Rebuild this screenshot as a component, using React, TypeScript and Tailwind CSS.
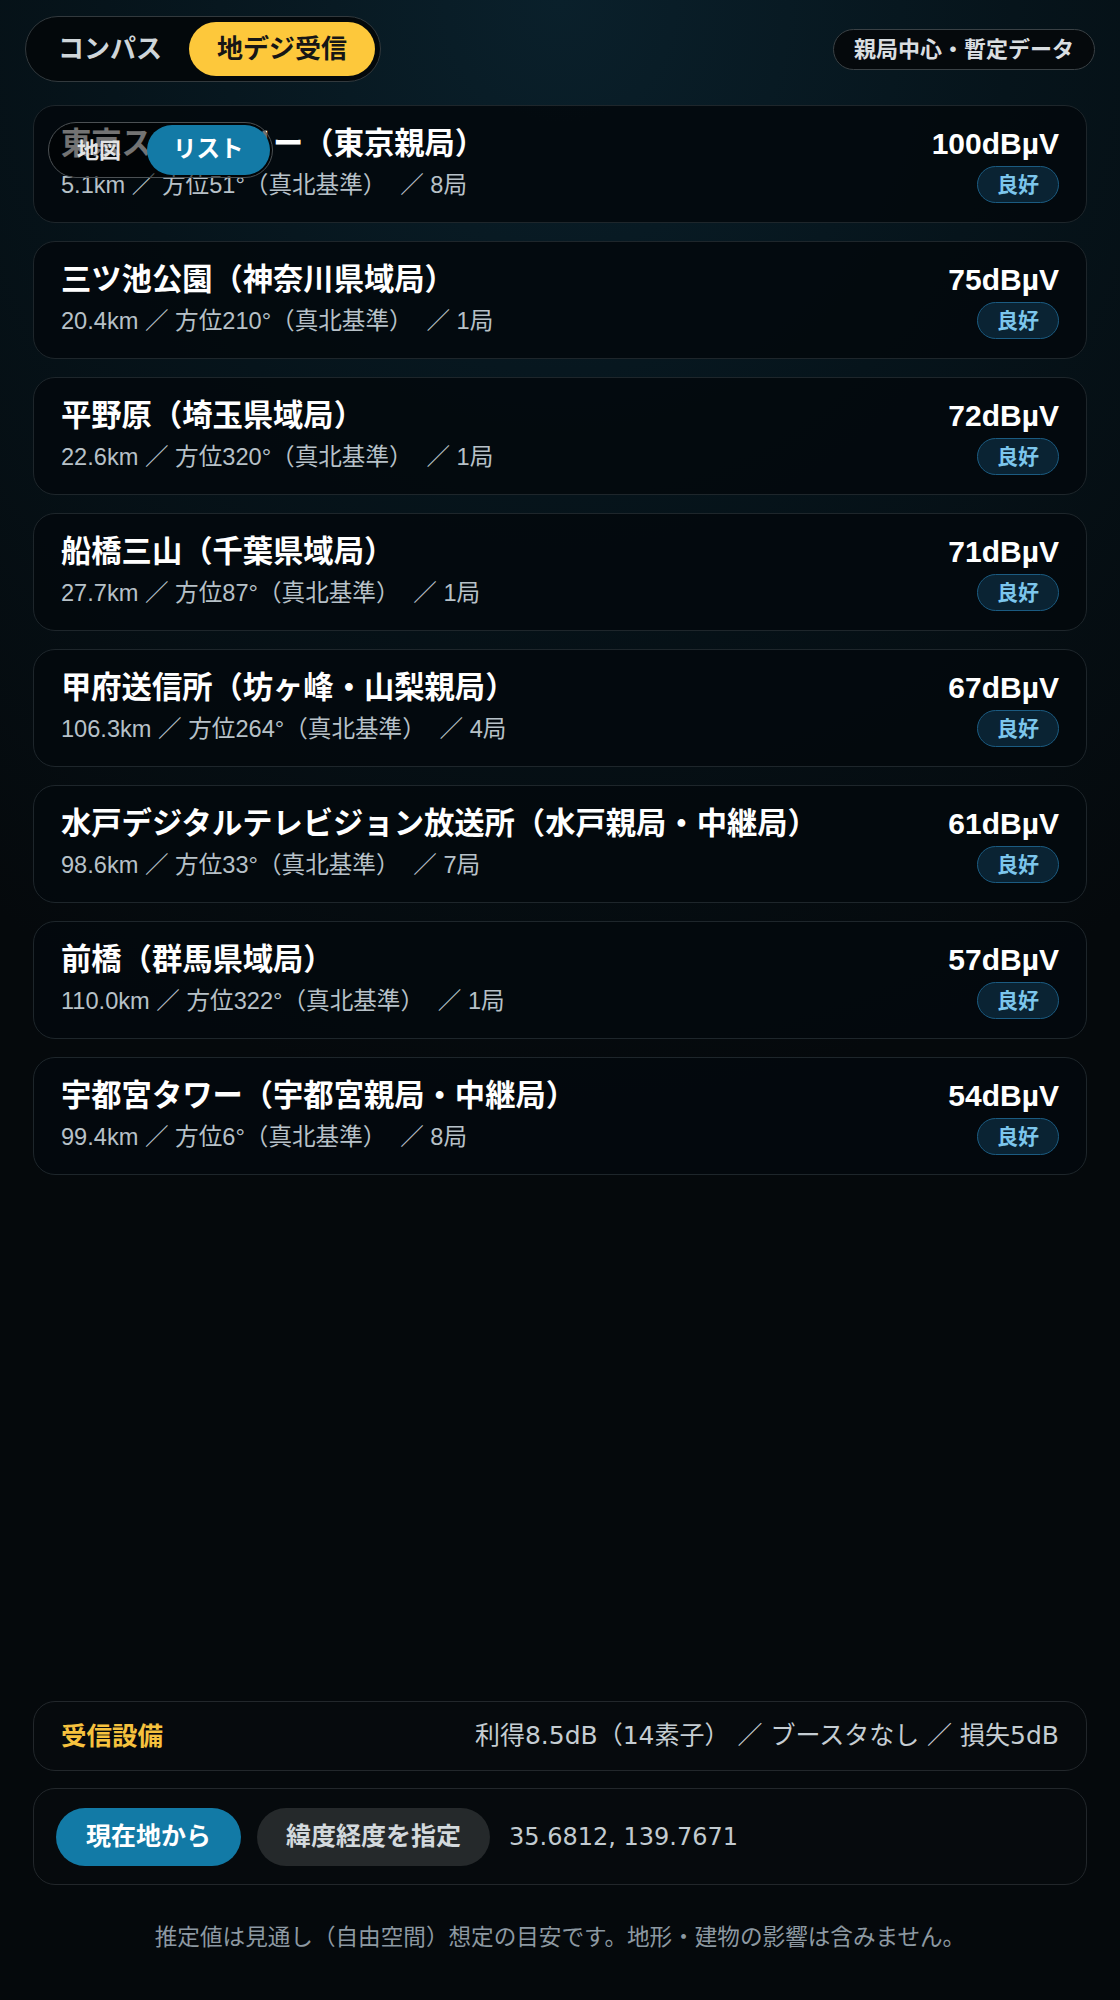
const stations = [
  { name: "東京スカイツリー（東京親局）", km: "5.1", deg: 51, count: 8, db: 100 },
  { name: "三ツ池公園（神奈川県域局）", km: "20.4", deg: 210, count: 1, db: 75 },
  { name: "平野原（埼玉県域局）", km: "22.6", deg: 320, count: 1, db: 72 },
  { name: "船橋三山（千葉県域局）", km: "27.7", deg: 87, count: 1, db: 71 },
  { name: "甲府送信所（坊ヶ峰・山梨親局）", km: "106.3", deg: 264, count: 4, db: 67 },
  { name: "水戸デジタルテレビジョン放送所（水戸親局・中継局）", km: "98.6", deg: 33, count: 7, db: 61 },
  { name: "前橋（群馬県域局）", km: "110.0", deg: 322, count: 1, db: 57 },
  { name: "宇都宮タワー（宇都宮親局・中継局）", km: "99.4", deg: 6, count: 8, db: 54 },
];

const StationCard = ({ s }) => {
  return (
    <div className="flex justify-between items-start h-[118px] px-[27px] pt-[20px] rounded-[22px] border border-[#1e262b] bg-[#03090d]/90">
      <div className="min-w-0">
        <div className="text-[30.3px] leading-[36px] font-bold text-white whitespace-nowrap">{s.name}</div>
        <div className="mt-[7px] text-[23.6px] leading-[32px] text-[#b7c1c8] whitespace-nowrap">
          {s.km}km ／ 方位{s.deg}°（真北基準）　<span className="pl-[2px]">／ {s.count}局</span>
        </div>
      </div>
      <div className="flex flex-col items-end shrink-0">
        <div className="text-[30px] leading-[36px] font-bold text-white">{s.db}dBµV</div>
        <div className="mt-[4px] h-[37px] px-[19px] flex items-center rounded-full border-[1.5px] border-[#1b5b81] bg-[#0a2333] text-[21px] font-bold text-[#7cc6ec]">
          良好
        </div>
      </div>
    </div>
  );
};

export default function App() {
  return (
    <div className="min-h-screen flex flex-col font-['Liberation_Sans','Noto_Sans_CJK_JP',sans-serif] bg-[radial-gradient(ellipse_90%_55%_at_50%_0%,#0a202b_0%,#06141b_45%,#05090c_100%)]">
      <div className="flex justify-between items-center px-[25px] pt-[16px]">
        <div className="flex items-center p-[5px] rounded-full border border-[#32393d] bg-[#03080b]">
          <div className="h-[54px] px-[27px] flex items-center text-[26px] font-bold text-[#cfd6da]">コンパス</div>
          <div className="h-[54px] px-[28px] flex items-center rounded-full bg-[#fdc83b] text-[26px] font-bold text-[#161616]">
            地デジ受信
          </div>
        </div>
        <div className="h-[41px] px-[20px] flex items-center rounded-full border border-[#3a4145] bg-[#05090c] text-[22px] font-semibold text-[#d9dee1]">
          親局中心・暫定データ
        </div>
      </div>

      <div className="relative flex-1 px-[33px] mt-[23px]">
        <div className="flex flex-col gap-[18px]">
          {stations.map((s) => (
            <StationCard key={s.name} s={s} />
          ))}
        </div>
        <div className="absolute left-[48px] top-[17px] flex items-center h-[56px] p-[2px] rounded-full border-[1.5px] border-[#4b5053] bg-black/55">
          <div className="px-[26px] text-[22px] font-bold text-[#e2e4e5]">地図</div>
          <div className="h-[50px] px-[26px] flex items-center rounded-full bg-[#137aa6] text-[23.5px] font-bold text-white">
            リスト
          </div>
        </div>
      </div>

      <div className="px-[33px]">
        <div className="flex justify-between items-center h-[70px] px-[27px] rounded-[22px] border border-[#22272b] bg-[#060a0d]">
          <div className="text-[25.5px] font-bold text-[#f6c23e]">受信設備</div>
          <div className="font-['DejaVu_Sans','Noto_Sans_CJK_JP',sans-serif] text-[25px] text-[#c5cdd2]">
            利得8.5dB（14素子） ／ ブースタなし ／ 損失5dB
          </div>
        </div>
        <div className="mt-[17px] flex items-center gap-[16px] h-[97px] px-[22px] rounded-[22px] border border-[#22272b] bg-[#060a0d]">
          <div className="h-[58px] px-[30px] flex items-center rounded-full bg-[#127aa6] text-[25px] font-bold text-white">
            現在地から
          </div>
          <div className="h-[58px] px-[29px] flex items-center rounded-full bg-[#25292b] text-[25px] font-bold text-[#d3d9dd]">
            緯度経度を指定
          </div>
          <div className="ml-[3px] font-['DejaVu_Sans',sans-serif] text-[24px] text-[#c2cbd0]">35.6812, 139.7671</div>
        </div>
        <div className="mt-[37px] mb-[46px] text-center text-[22.6px] leading-[32px] text-[#8d99a2]">
          推定値は見通し（自由空間）想定の目安です。地形・建物の影響は含みません。
        </div>
      </div>
    </div>
  );
}
